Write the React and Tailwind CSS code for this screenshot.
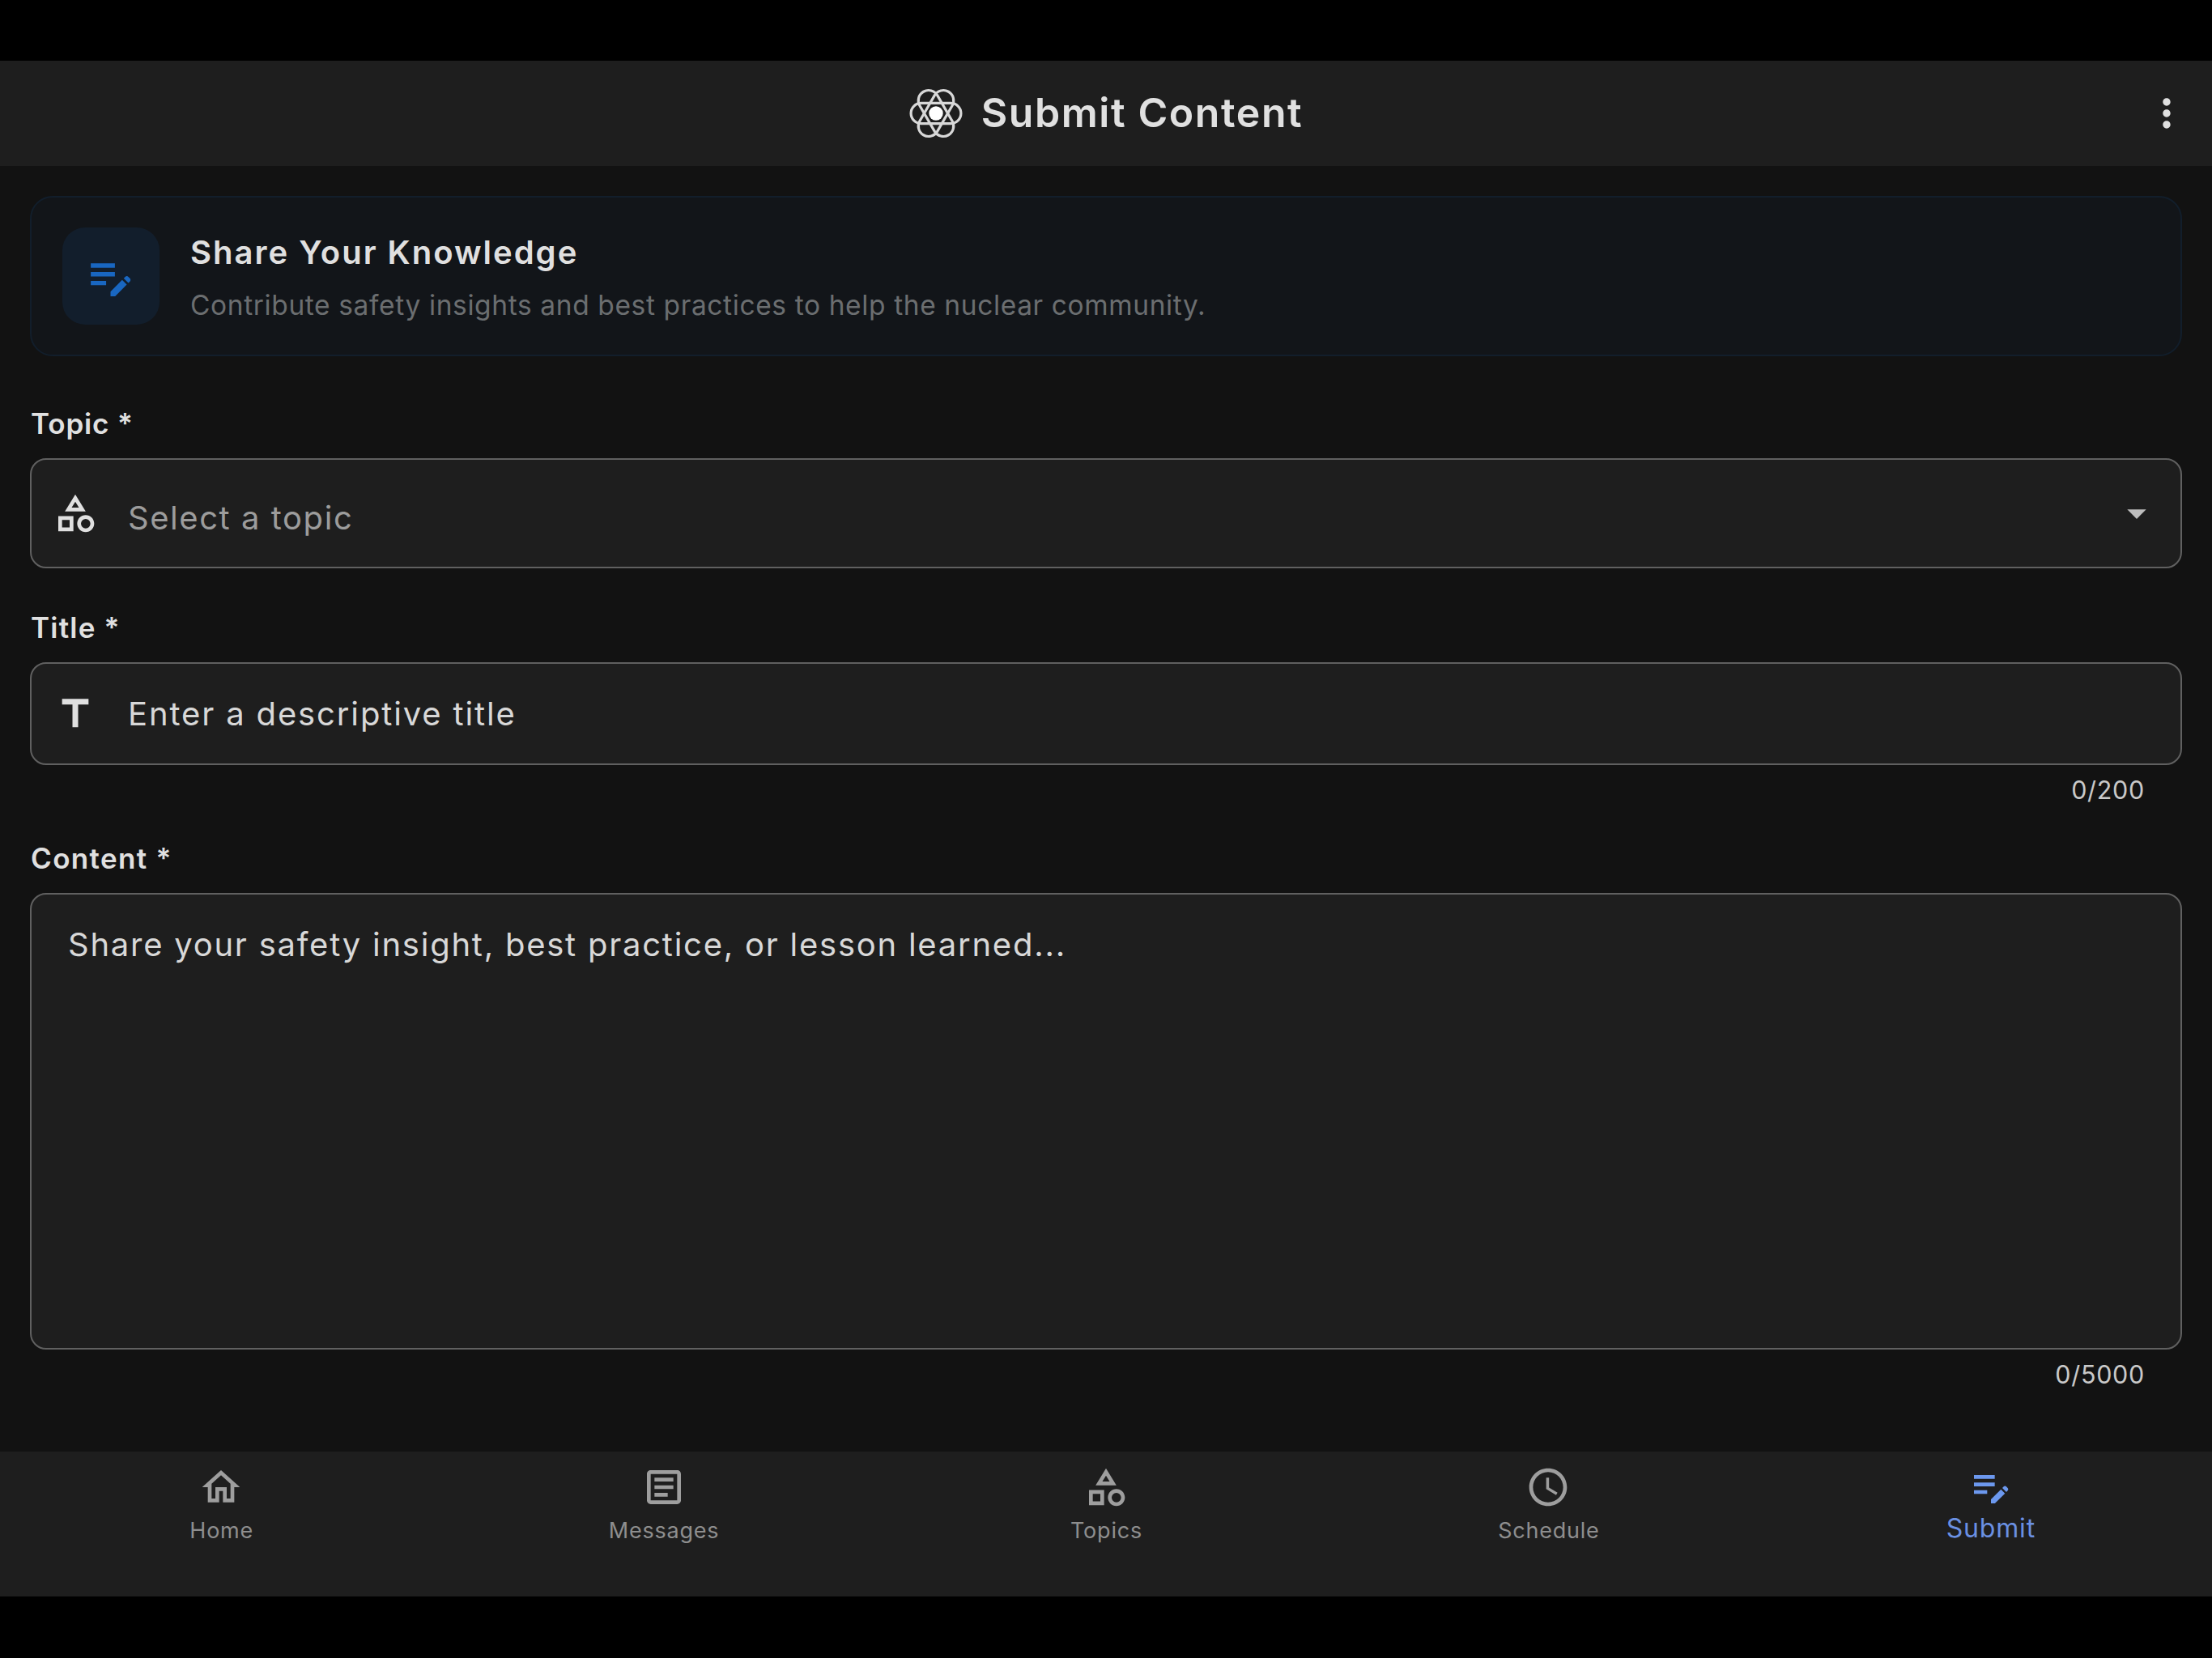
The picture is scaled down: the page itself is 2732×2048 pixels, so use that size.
import React from "react";
import {
  MdArrowDropDown,
  MdEditNote,
  MdMoreVert,
  MdOutlineArticle,
  MdOutlineCategory,
  MdOutlineHome,
  MdSchedule,
  MdTitle,
} from "react-icons/md";

function AtomLogo() {
  return (
    <svg className="size-[66px]" viewBox="-33 -33 66 66" fill="none" stroke="#d8d8d8" strokeWidth="3.2">
      {[0, 60, 120].map((angle) => (
        <rect key={angle} x="-30.9" y="-12.6" width="61.8" height="25.2" rx="12.6" transform={`rotate(${angle})`} />
      ))}
      <circle r="10.5" fill="#1e1e1e" stroke="none" />
      <circle r="8.7" fill="#ffffff" stroke="none" />
    </svg>
  );
}

function Header() {
  return (
    <header className="flex h-[130px] items-center bg-[#1e1e1e]">
      <div className="flex-1" />
      <div className="flex items-center gap-[23px]">
        <AtomLogo />
        <h1 className="-mt-0.5 text-[50px] leading-[60px] font-semibold tracking-[1.58px] whitespace-nowrap">
          Submit Content
        </h1>
      </div>
      <div className="flex flex-1 justify-end">
        <MdMoreVert className="mr-7 size-14" />
      </div>
    </header>
  );
}

function Banner() {
  return (
    <section className="flex h-[198px] gap-[38px] rounded-[28px] border-2 border-[#121e2b] bg-[#121519] py-[37px] pl-[38px]">
      <div className="flex size-[120px] items-center justify-center rounded-[28px] bg-[#121e2c]">
        <MdEditNote className="mr-px size-[65px] text-[#1967c1]" />
      </div>
      <div className="flex flex-col pt-[3px]">
        <h2 className="text-[40px] leading-[56px] font-semibold tracking-[2px]">Share Your Knowledge</h2>
        <p className="mt-[13px] text-[33.5px] leading-[48px] tracking-[0.62px] text-[#6b6e70]">
          Contribute safety insights and best practices to help the nuclear community.
        </p>
      </div>
    </section>
  );
}

function Label({ className, children }) {
  return <label className={`block pl-px text-[35px] leading-[44px] font-semibold ${className}`}>{children}</label>;
}

function Counter({ children }) {
  return (
    <div className="mt-[11px] pr-[46px] text-right text-[30.5px] leading-[40px] tracking-[0.7px] text-[#c9c9c9]">
      {children}
    </div>
  );
}

const fieldBox = "rounded-[20px] border-2 border-[#606060] bg-[#1e1e1e]";

const tabs = [
  { label: "Home", Icon: MdOutlineHome },
  { label: "Messages", Icon: MdOutlineArticle },
  { label: "Topics", Icon: MdOutlineCategory },
  { label: "Schedule", Icon: MdSchedule },
  { label: "Submit", Icon: MdEditNote, active: true },
];

function BottomNav() {
  return (
    <nav className="grid h-[179px] grid-cols-5 bg-[#1e1e1e]">
      {tabs.map(({ label, Icon, active }) => (
        <div
          key={label}
          className={`flex flex-col items-center ${active ? "pt-[15px] text-[#6c98ee]" : "pt-4 text-[#9e9e9e]"}`}
        >
          <Icon className="size-14" />
          <span
            className={
              active
                ? "mt-2 text-[32px] leading-[32px] tracking-[0.83px] text-[#6a90e2]"
                : "mt-2.5 pl-px text-[27px] leading-[32px] tracking-[0.78px] text-[#8e8e8e]"
            }
          >
            {label}
          </span>
        </div>
      ))}
    </nav>
  );
}

export default function App() {
  return (
    <div className="flex h-[2048px] w-[2732px] flex-col overflow-hidden bg-black pt-[75px] font-['Inter',sans-serif] text-[#e0e0e0]">
      <Header />
      <main className="h-[1588px] bg-[#121212] px-[37px] pt-[37px]">
        <Banner />

        <Label className="mt-[61px] tracking-[0.85px]">Topic *</Label>
        <div className={`mt-[21px] flex h-[136px] items-center px-[26px] ${fieldBox}`}>
          <MdOutlineCategory className="size-14" />
          <span className="mt-[11px] ml-[37px] flex-1 text-[40px] leading-[56px] tracking-[1.55px] text-[#9c9c9c]">
            Select a topic
          </span>
          <MdArrowDropDown className="size-14 text-[#bdbdbd]" />
        </div>

        <Label className="mt-[51px] tracking-[1.2px]">Title *</Label>
        <div className={`mt-[21px] flex h-[127px] items-center pl-[26px] ${fieldBox}`}>
          <MdTitle className="size-14" />
          <span className="mt-px ml-[37px] text-[40px] leading-[56px] tracking-[1.86px] text-[#d8d8d8]">
            Enter a descriptive title
          </span>
        </div>
        <Counter>0/200</Counter>

        <Label className="mt-[42px] tracking-[1.35px]">Content *</Label>
        <div className={`mt-[21px] h-[564px] pt-[34px] pl-[45px] ${fieldBox}`}>
          <p className="text-[40px] leading-[56px] tracking-[1.75px] text-[#d8d8d8]">
            Share your safety insight, best practice, or lesson learned...
          </p>
        </div>
        <Counter>0/5000</Counter>
      </main>
      <BottomNav />
    </div>
  );
}
